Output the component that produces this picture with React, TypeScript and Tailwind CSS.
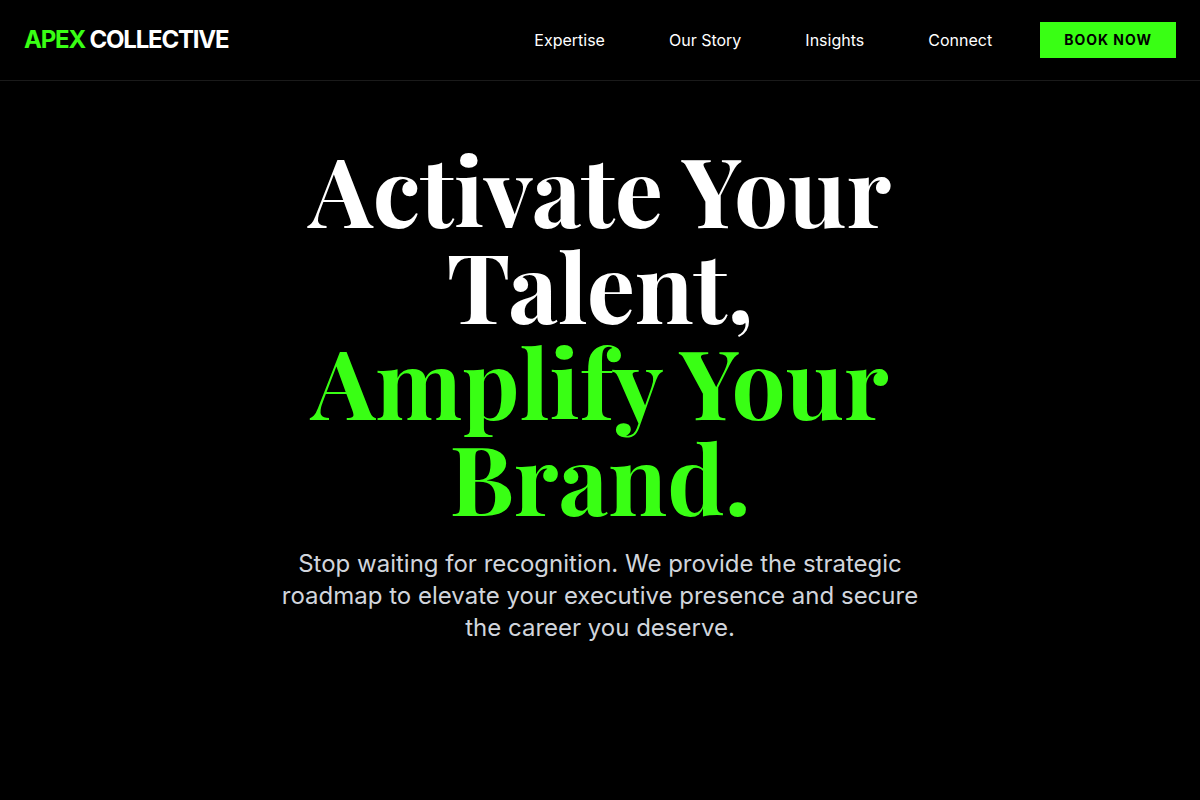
const navLinks = [
  { label: 'Expertise', href: '#expertise' },
  { label: 'Our Story', href: '#story' },
  { label: 'Insights', href: '#insights' },
  { label: 'Connect', href: '#connect' },
]

function Navbar() {
  return (
    <header className="border-b border-white/10">
      <div className="h-20 px-6 flex items-center justify-between">
        <a href="#" className="text-2xl font-bold tracking-tighter text-white">
          <span className="text-[#39ff14]">APEX</span> COLLECTIVE
        </a>

        <div className="flex items-center gap-12">
          <nav className="flex items-center gap-16">
            {navLinks.map((link) => (
              <a key={link.label} href={link.href} className="text-base text-white hover:text-[#39ff14]">
                {link.label}
              </a>
            ))}
          </nav>
          <button
            type="button"
            className="bg-[#39ff14] text-black text-sm font-bold uppercase tracking-[1px] px-6 py-2 cursor-pointer"
          >
            Book Now
          </button>
        </div>
      </div>
    </header>
  )
}

function Hero() {
  return (
    <section className="px-6 pt-[59px] pb-24 text-center">
      <h1 className="max-w-4xl mx-auto font-['Playfair_Display','Liberation_Serif',serif] text-8xl leading-none font-bold text-white">
        Activate Your
        <br />
        Talent,
        <br />
        <span className="text-[#39ff14]">
          Amplify Your
          <br />
          Brand.
        </span>
      </h1>
      <p className="max-w-2xl mx-auto mt-6 text-2xl text-gray-300">
        Stop waiting for recognition. We provide the strategic roadmap to elevate your executive presence and secure
        the career you deserve.
      </p>
    </section>
  )
}

export default function App() {
  return (
    <div className="min-h-screen bg-black font-['Inter',sans-serif]">
      <Navbar />
      <main>
        <Hero />
      </main>
    </div>
  )
}
